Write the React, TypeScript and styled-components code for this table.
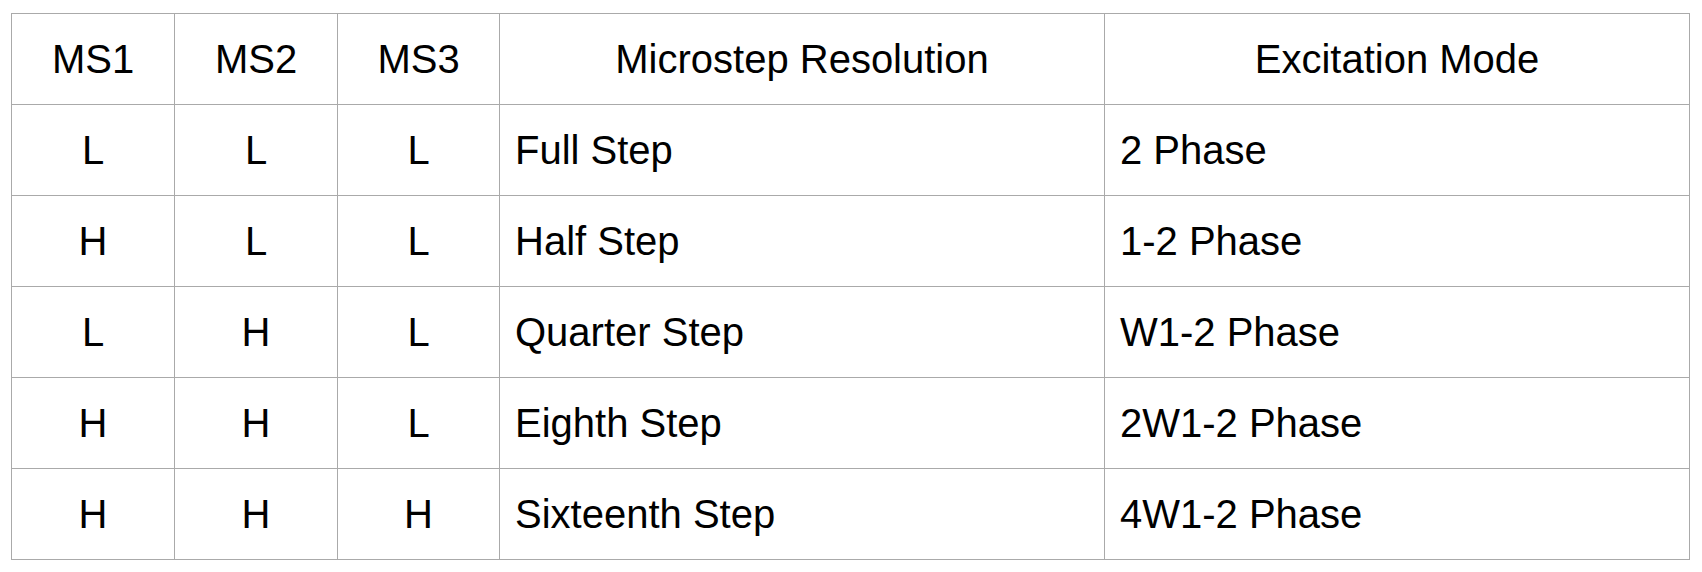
import React from "react";
import styled, { createGlobalStyle } from "styled-components";

const GlobalStyle = createGlobalStyle`
  html, body {
    margin: 0;
    padding: 0;
    background: #ffffff;
  }
  body {
    font-family: "Liberation Sans", Arial, Helvetica, sans-serif;
    color: #000000;
  }
`;

const Page = styled.div`
  padding: 13px 0 0 11px;
`;

const Table = styled.div`
  display: grid;
  grid-template-columns: 162px 162px 161px 604px 584px;
  grid-auto-rows: 90px;
  gap: 1px;
  padding: 1px;
  width: max-content;
  background: #aaaaaa;
`;

const Cell = styled.div<{ $align?: "center" | "left" }>`
  display: flex;
  align-items: center;
  justify-content: ${(p) => (p.$align === "left" ? "flex-start" : "center")};
  padding: 0 ${(p) => (p.$align === "left" ? "15px" : "0")};
  background: #ffffff;
  font-size: 40px;
  line-height: 1;
  white-space: nowrap;
`;

const HeaderCell = styled(Cell)`
  font-weight: 400;
`;

const headers = ["MS1", "MS2", "MS3", "Microstep Resolution", "Excitation Mode"];

const rows: [string, string, string, string, string][] = [
  ["L", "L", "L", "Full Step", "2 Phase"],
  ["H", "L", "L", "Half Step", "1-2 Phase"],
  ["L", "H", "L", "Quarter Step", "W1-2 Phase"],
  ["H", "H", "L", "Eighth Step", "2W1-2 Phase"],
  ["H", "H", "H", "Sixteenth Step", "4W1-2 Phase"],
];

export default function App() {
  return (
    <>
      <GlobalStyle />
      <Page>
        <Table role="table">
          {headers.map((h) => (
            <HeaderCell key={h} role="columnheader">
              {h}
            </HeaderCell>
          ))}
          {rows.map((r, i) =>
            r.map((v, j) => (
              <Cell key={`${i}-${j}`} role="cell" $align={j >= 3 ? "left" : "center"}>
                {v}
              </Cell>
            ))
          )}
        </Table>
      </Page>
    </>
  );
}
